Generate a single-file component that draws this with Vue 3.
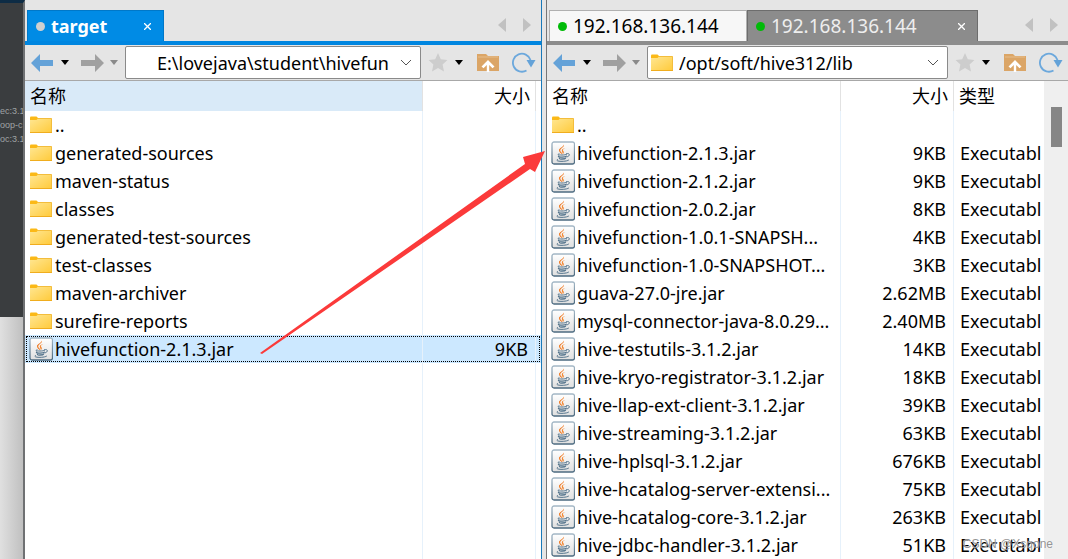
<script setup>
const folders = ['..', 'generated-sources', 'maven-status', 'classes', 'generated-test-sources', 'test-classes', 'maven-archiver', 'surefire-reports']
const local = [
  ...folders.map((name) => ({ name, folder: true, size: '' })),
  { name: 'hivefunction-2.1.3.jar', size: '9KB', selected: true },
]
const type = 'Executabl'
const remote = [
  { name: '..', folder: true, size: '', type: '' },
  { name: 'hivefunction-2.1.3.jar', size: '9KB', type },
  { name: 'hivefunction-2.1.2.jar', size: '9KB', type },
  { name: 'hivefunction-2.0.2.jar', size: '8KB', type },
  { name: 'hivefunction-1.0.1-SNAPSH...', size: '4KB', type },
  { name: 'hivefunction-1.0-SNAPSHOT...', size: '3KB', type },
  { name: 'guava-27.0-jre.jar', size: '2.62MB', type },
  { name: 'mysql-connector-java-8.0.29...', size: '2.40MB', type },
  { name: 'hive-testutils-3.1.2.jar', size: '14KB', type },
  { name: 'hive-kryo-registrator-3.1.2.jar', size: '18KB', type },
  { name: 'hive-llap-ext-client-3.1.2.jar', size: '39KB', type },
  { name: 'hive-streaming-3.1.2.jar', size: '63KB', type },
  { name: 'hive-hplsql-3.1.2.jar', size: '676KB', type },
  { name: 'hive-hcatalog-server-extensi...', size: '75KB', type },
  { name: 'hive-hcatalog-core-3.1.2.jar', size: '263KB', type },
  { name: 'hive-jdbc-handler-3.1.2.jar', size: '51KB', type },
]
const panes = [
  {
    id: 'local',
    tabs: [{ title: 'target', kind: 'active', dot: 'grey', close: true }],
    path: 'E:\\lovejava\\student\\hivefun',
    rows: local,
  },
  {
    id: 'remote',
    tabs: [
      { title: '192.168.136.144', kind: 'idle', dot: 'green' },
      { title: '192.168.136.144', kind: 'current', dot: 'green', close: true },
    ],
    path: '/opt/soft/hive312/lib',
    rows: remote,
  },
]
</script>

<template>
  <div class="screen">
    <svg class="defs" width="0" height="0" aria-hidden="true">
      <defs>
        <linearGradient id="folder-face" x1="0" y1="0" x2="1" y2="1">
          <stop offset="0" stop-color="#ffe794" />
          <stop offset="1" stop-color="#ffcb3d" />
        </linearGradient>
        <linearGradient id="jar-face" x1="0" y1="0" x2="0" y2="1">
          <stop offset="0" stop-color="#ffffff" />
          <stop offset="1" stop-color="#dfdfdf" />
        </linearGradient>
        <linearGradient id="jar-edge" x1="0" y1="0" x2="0" y2="1">
          <stop offset="0" stop-color="#a3b7c6" />
          <stop offset="1" stop-color="#4c6a80" />
        </linearGradient>
      </defs>
      <symbol id="folder" viewBox="0 0 22 18">
        <path d="M0 1.5Q0 .5 1 .5H6.5L8.5 2.5V6H0Z" fill="#fbb917" />
        <path d="M0 4H6.5L8.5 2H21.500V16H0Z" fill="url(#folder-face)" />
        <path d="M8 2.500H21.500V16.500" fill="none" stroke="#f3bd3c" />
        <path d="M0 16.500H22" stroke="#f0ad1e" />
      </symbol>
      <symbol id="jar" viewBox="0 0 24 24">
        <rect x="1" y="1" width="22.500" height="22" rx="2" fill="url(#jar-face)" stroke="url(#jar-edge)" stroke-width="1.300" />
        <path d="M12.600 3.500C14 6 9.200 7.200 9.200 9.500C9.200 11.200 11.500 11.500 11.300 13.300C9.800 12.200 7.800 10.800 8 9C8.200 7 12.600 6 12.600 3.500Z" fill="#f0771e" />
        <path d="M14.400 7C11.800 8.200 11.500 9 12.500 10.300C13.300 11.400 12.800 12.500 11.800 13.300C12 11.500 10.500 11 10.800 9.300C11 7.800 13 7.300 14.400 7Z" fill="#f58a35" />
        <g fill="none" stroke="#54748c" stroke-linecap="round">
          <path d="M8 12.700C5.500 13.800 7.500 14 11 14C13.500 14 14.500 13.700 15.500 13.300" />
          <path d="M7.500 15.200C7 16.400 15 16.300 15.300 15.200M8.500 17.200C8 18.300 14 18.300 14.500 17.200" stroke-width="1.300" />
          <path d="M15.500 12.700C19.500 11.600 19.200 15.500 15.800 15.900" />
          <path d="M6.500 18.500C2.500 20.700 15 21.100 17.500 19.200" />
        </g>
      </symbol>
    </svg>

    <aside class="behind">
      <div class="code"><span>ec:3.1.</span><span>oop-c</span><span>oc:3.1.</span></div>
      <div class="lower"></div>
    </aside>

    <main class="panes">
      <section v-for="p in panes" :key="p.id" :class="['pane', p.id]">
        <header class="tabs">
          <button v-for="(t, i) in p.tabs" :key="i" :class="['tab', t.kind]">
            <i :class="['dot', t.dot]"></i>
            <span>{{ t.title }}</span>
            <svg v-if="t.close" class="close" width="7" height="7" viewBox="0 0 7 7"><path d="M0 0L7 7M7 0L0 7" stroke="#fff" stroke-width="1.300" /></svg>
          </button>
          <div class="scrollers">
            <button aria-label="Previous tab"><svg width="8" height="14" viewBox="0 0 8 14"><path d="M8 0V14L0 7Z" fill="#c1c1c1" /></svg></button>
            <button aria-label="Next tab"><svg width="8" height="14" viewBox="0 0 8 14"><path d="M0 0V14L8 7Z" fill="#c1c1c1" /></svg></button>
          </div>
        </header>

        <nav class="tools">
          <button class="nav" aria-label="Back"><svg width="22" height="18" viewBox="0 0 22 18"><path d="M0 9L9 0V6H22V12H9V18Z" fill="#64a2d8" /></svg></button>
          <button class="drop" aria-label="Back history"><svg width="8" height="5" viewBox="0 0 8 5"><path d="M0 0H8L4 5Z" fill="#000" /></svg></button>
          <button class="nav" aria-label="Forward"><svg width="23" height="18" viewBox="0 0 23 18"><path d="M23 9L14 0V6H0V12H14V18Z" fill="#a0a0a0" /></svg></button>
          <button class="drop" aria-label="Forward history"><svg width="8" height="5" viewBox="0 0 8 5"><path d="M0 0H8L4 5Z" fill="#8a8a8a" /></svg></button>
          <div class="address">
            <svg v-if="p.id === 'remote'" class="folder" width="22" height="18"><use href="#folder" /></svg>
            <input :value="p.path" aria-label="Path" />
            <button aria-label="Recent paths"><svg width="12" height="7" viewBox="0 0 12 7"><path d="M1 1L6 6L11 1" fill="none" stroke="#555" /></svg></button>
          </div>
          <button class="star" aria-label="Bookmark"><svg width="20" height="19" viewBox="0 0 20 19"><path d="M10 0L12.800 6.200L19.500 7L14.600 11.600L16 18.500L10 15L4 18.500L5.400 11.600L.5 7L7.200 6.200Z" fill="#cdcdcd" /></svg></button>
          <button class="drop" aria-label="Bookmarks"><svg width="8" height="5" viewBox="0 0 8 5"><path d="M0 0H8L4 5Z" fill="#000" /></svg></button>
          <button class="up" aria-label="Parent folder"><svg width="22" height="20" viewBox="0 0 22 20"><path d="M0 1H9L11 3H22V18H0Z" fill="#dba566" /><path d="M1 4H21" stroke="#e6bd8b" /><path d="M11 7L4.500 13.500L6.500 15.200L9.800 12V19H12.200V12L15.500 15.200L17.500 13.500Z" fill="#fff" /></svg></button>
          <button class="refresh" aria-label="Refresh"><svg width="24" height="21" viewBox="0 0 24 21"><path d="M14.500 18.500A9 9 0 1 1 18.500 8" fill="none" stroke="#6ca8dc" stroke-width="1.800" /><path d="M14.500 8H23.500L19 15.500Z" fill="#64a2d8" /></svg></button>
        </nav>

        <div class="list">
          <table>
            <colgroup><col /><col class="c-size" /><col class="c-last" /></colgroup>
            <thead>
              <tr><th>名称</th><th class="size">大小</th><th><span v-if="p.id === 'remote'">类型</span></th></tr>
            </thead>
            <tbody>
              <tr v-for="r in p.rows" :key="r.name" :class="{ selected: r.selected }">
                <td>
                  <div class="name">
                    <svg v-if="r.folder" class="folder" width="22" height="18"><use href="#folder" /></svg>
                    <svg v-else class="jar" width="24" height="24"><use href="#jar" /></svg>
                    <span>{{ r.name }}</span>
                  </div>
                </td>
                <td class="size">{{ r.size }}</td>
                <td class="type">{{ r.type }}</td>
              </tr>
              <tr class="rest"><td></td><td></td><td></td></tr>
            </tbody>
          </table>
          <div v-if="p.id === 'remote'" class="scrollbar"><i></i></div>
        </div>
      </section>
    </main>

    <svg class="pointer" width="286" height="206" viewBox="0 0 286 206" aria-hidden="true">
      <path d="M0 204L265 15L263 8L285 2L275 23L270 20L2 205Z" fill="#fb3a3a" />
    </svg>
    <span class="mark">CSDN @Xsqone</span>
  </div>
</template>

<style>
html, body, #app { height: 100%; }
body { overflow: hidden; }
</style>

<style scoped>
* { box-sizing: border-box; }
.screen {
  position: relative;
  display: flex;
  height: 100%;
  overflow: hidden;
  background: #e5e5e5;
  color: #000;
  font: 18px/28px "Noto Sans", "Noto Sans CJK SC", sans-serif;
}
.defs { position: absolute; }
button { border: 0; padding: 0; background: none; font: inherit; color: inherit; display: flex; align-items: center; justify-content: center; flex: none; }
svg { display: block; flex: none; }

.behind { flex: 0 0 25px; display: flex; flex-direction: column; overflow: hidden; background: #3a3d3f; border-top: 3px solid #0d2c45; border-right: 2px solid #6f7173; }
.code { height: 314px; padding-top: 101px; color: #a0a3a5; font: 9px/14px "Liberation Sans", sans-serif; white-space: nowrap; }
.code span { display: block; }
.lower { flex: 1; background: linear-gradient(90deg, #e0e0e0, #c0c0c0); margin-right: -2px; border-right: 2px solid #a2a2a2; }

.panes { flex: 1; min-width: 0; display: grid; grid-template-columns: 517px minmax(0, 1fr); column-gap: 4px; }
.pane { display: flex; flex-direction: column; min-width: 0; min-height: 0; }
.local { border-right: 1px solid #1979b9; }
.remote { border-left: 1px solid #777; }

.tabs { flex: 0 0 45px; display: flex; align-items: flex-start; padding: 10px 0 0 2px; border-bottom: 4px solid #0086e0; }
.remote .tabs { border-color: #8c8c8c; }
.tab { height: 31px; padding: 2px 12px 2px 8px; border: 1px solid #b0b0b0; border-bottom: 0; justify-content: flex-start; line-height: 26px; font-size: 19px; }
.tab.active { width: 137px; background: #008be5; border-color: #0078c8; color: #fff; font-size: 18px; font-weight: 700; }
.tab.idle { width: 198px; background: #f7f7f7; }
.tab.current { width: 231px; background: #8c8c8c; border-color: #6d6d6d; color: #eee; }
.tab .close { margin-left: auto; }
.dot { width: 9px; height: 9px; border-radius: 50%; margin-right: 6px; flex: none; }
.dot.grey { background: #d0d0d0; }
.dot.green { background: #00bb08; }
.scrollers { display: flex; gap: 17px; margin: 8px 10px 0 auto; }

.tools { flex: 0 0 36px; display: flex; align-items: center; padding: 0 5px 0 6px; border-bottom: 1px solid #a8a8a8; }
.drop { margin: 0 7px; }
.nav + .drop { margin: 0 8px; }
.nav ~ .nav { margin-left: 4px; }
.nav ~ .nav + .drop { margin: 0 7px 0 6px; }
.address { flex: 1; min-width: 0; height: 33px; display: flex; align-items: center; padding: 0 8px 0 3px; border: 1px solid #8a8a8a; border-radius: 2px; background: #fff; }
.address input { flex: 1; min-width: 0; border: 0; outline: 0; padding: 0 0 0 6px; background: none; font: inherit; height: 28px; }
.local .address input { padding-left: 28px; }
.star { margin-left: 7px; }
.up { margin: 0 13px 0 7px; }

.list { flex: 1; min-height: 0; display: flex; overflow: hidden; background: #fff; }
table { flex: 1; min-width: 0; width: 100%; table-layout: fixed; border-collapse: separate; border-spacing: 0; height: 100%; }
.c-size { width: 113px; }
.c-last { width: 91px; }
.local .c-last { width: 6px; }
th { height: 30px; padding: 0 5px; text-align: left; font-weight: 400; border-left: 1px solid #e2e2e2; }
td { height: 28px; padding: 0; border-left: 1px solid #e6f1fb; white-space: nowrap; overflow: hidden; }
th:first-child, td:first-child { border-left: 0; }
.local th:first-child { background: #d9eaf8; }
.local th:last-child, .local td:last-child { padding: 0; }
.size { text-align: right; padding-right: 7px; }
th.size { padding-right: 5px; }
.type { padding-left: 6px; }
.name { display: flex; align-items: center; height: 28px; padding-left: 5px; }
.name .folder { margin-right: 3px; }
.name .jar { margin-left: -1px; margin-right: 2px; }
.selected { outline: 1px dotted #000; outline-offset: -2px; }
.selected td { background: #cce8ff; }
.rest td { height: auto; }
.scrollbar { flex: 0 0 24px; background: #efefef; padding: 26px 5px 0 7px; }
.scrollbar i { display: block; width: 11px; height: 40px; background: #868686; }

.pointer { position: absolute; left: 260px; top: 149px; }
.mark { position: absolute; right: 15px; bottom: 6px; color: rgba(120, 120, 120, 0.8); font: 12px/18px "Liberation Sans", sans-serif; text-shadow: 0 0 1px #fff; }
</style>
